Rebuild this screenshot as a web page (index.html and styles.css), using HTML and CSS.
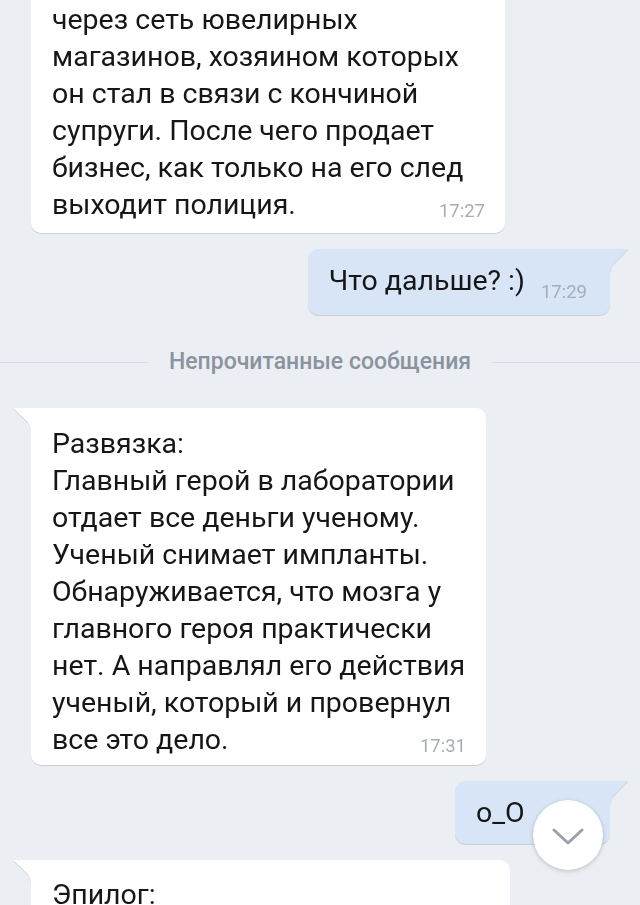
FILE: index.html
```html
<!DOCTYPE html>
<html lang="ru">
  <head>
    <meta charset="UTF-8" />
    <meta name="viewport" content="width=device-width, initial-scale=1" />
    <title>Диалог</title>
    <link rel="stylesheet" href="styles.css">
  </head>
  <body>

    <div class="chat">

      <div class="msg in first">
        <div class="bubble">
          через сеть ювелирных<br>
          магазинов, хозяином которых<br>
          он стал в связи с кончиной<br>
          супруги. После чего продает<br>
          бизнес, как только на его след<br>
          <span class="time">17:27</span>выходит полиция.
        </div>
      </div>

      <div class="msg out">
        <div class="bubble">
          Что дальше? :)<span class="time">17:29</span>
        </div>
      </div>

      <div class="divider">Непрочитанные сообщения</div>

      <div class="msg in">
        <div class="bubble narrow">
          Развязка:<br>
          Главный герой в лаборатории<br>
          отдает все деньги ученому.<br>
          Ученый снимает импланты.<br>
          Обнаруживается, что мозга у<br>
          главного героя практически<br>
          нет. А направлял его действия<br>
          ученый, который и провернул<br>
          <span class="time">17:31</span>все это дело.
        </div>
      </div>

      <div class="msg out">
        <div class="bubble short">
          o_O
        </div>
      </div>

      <div class="msg in">
        <div class="bubble wide">
          Эпилог:
        </div>
      </div>

    </div>

    <button class="scroll-down" aria-label="Вниз">
      <svg width="32" height="18" viewBox="0 0 32 18">
        <path d="M2 2 L16 15 L30 2" fill="none" stroke="#99a2ad" stroke-width="3" stroke-linecap="round" stroke-linejoin="round"/>
      </svg>
    </button>

  </body>
</html>
```

FILE: styles.css
```css
body{
  margin: 0;
  background: #ebeef2;
  font-family: Roboto, "Noto Sans", sans-serif;
  color: #161616;
  overflow: hidden;
}

.chat{
  display: flex;
  flex-direction: column;
  height: 905px;
}

.msg{
  display: flex;
  filter: drop-shadow(0 1px 0.5px rgba(0, 0, 0, 0.13));
}

.msg.in{
  padding-left: 31px;
}

.msg.out{
  justify-content: flex-end;
  padding-right: 30px;
}

.bubble{
  position: relative;
  font-size: 28.5px;
  line-height: 37px;
  white-space: nowrap;
}

.msg.in .bubble{
  width: 433px;
  padding: 16px 20px 7px 21px;
  background: #ffffff;
  border-radius: 0 10px 10px 10px;
}

.msg.in .bubble::before{
  content: '';
  position: absolute;
  left: -18px;
  top: 0;
  width: 19px;
  height: 24px;
  background: #ffffff;
  clip-path: polygon(0 0, 100% 0, 100% 100%, 80% 60%);
}

.msg.out .bubble{
  padding: 13px 23px 13px 21px;
  background: #d7e5f6;
  border-radius: 10px 0 10px 10px;
}

.msg.out .bubble::before{
  content: '';
  position: absolute;
  right: -18px;
  top: 0;
  width: 19px;
  height: 26px;
  background: #d7e5f6;
  clip-path: polygon(0 0, 100% 0, 20% 60%, 0 100%);
}

.msg.first{
  margin-top: -17px;
}

.msg.first .bubble{
  padding-top: 18px;
  padding-bottom: 10px;
  border-radius: 0 0 10px 10px;
}

.msg.first .bubble::before{
  display: none;
}

.msg.out{
  margin-top: 17px;
}

.msg.in + .msg.out{
  margin-top: 16px;
}

.msg.out + .msg.in{
  margin-top: 16px;
}

.bubble.narrow{
  width: 414px !important;
  padding-top: 17px !important;
}

.bubble.short{
  width: 111px;
}

.bubble.wide{
  width: 438px !important;
}

.time{
  font-size: 18.5px;
  line-height: 20px;
  color: #a5adb6;
}

.msg.in .time{
  float: right;
  margin-top: 15px;
}

.msg.out .time{
  margin-left: 16px;
  vertical-align: -8px;
}

.divider{
  display: flex;
  align-items: center;
  gap: 21px;
  margin: 34px 0 33px;
  font-size: 23px;
  font-weight: 500;
  color: #8a939e;
  line-height: 26px;
}

.divider::before,
.divider::after{
  content: '';
  flex: 1;
  height: 1px;
  background: #d5dae0;
}

.scroll-down{
  position: absolute;
  left: 533px;
  top: 800px;
  width: 70px;
  height: 70px;
  border: none;
  border-radius: 50%;
  background: #ffffff;
  box-shadow: 0 1px 4px rgba(0, 0, 0, 0.22);
  display: flex;
  align-items: center;
  justify-content: center;
  padding: 4px 0 0 0;
}
```
